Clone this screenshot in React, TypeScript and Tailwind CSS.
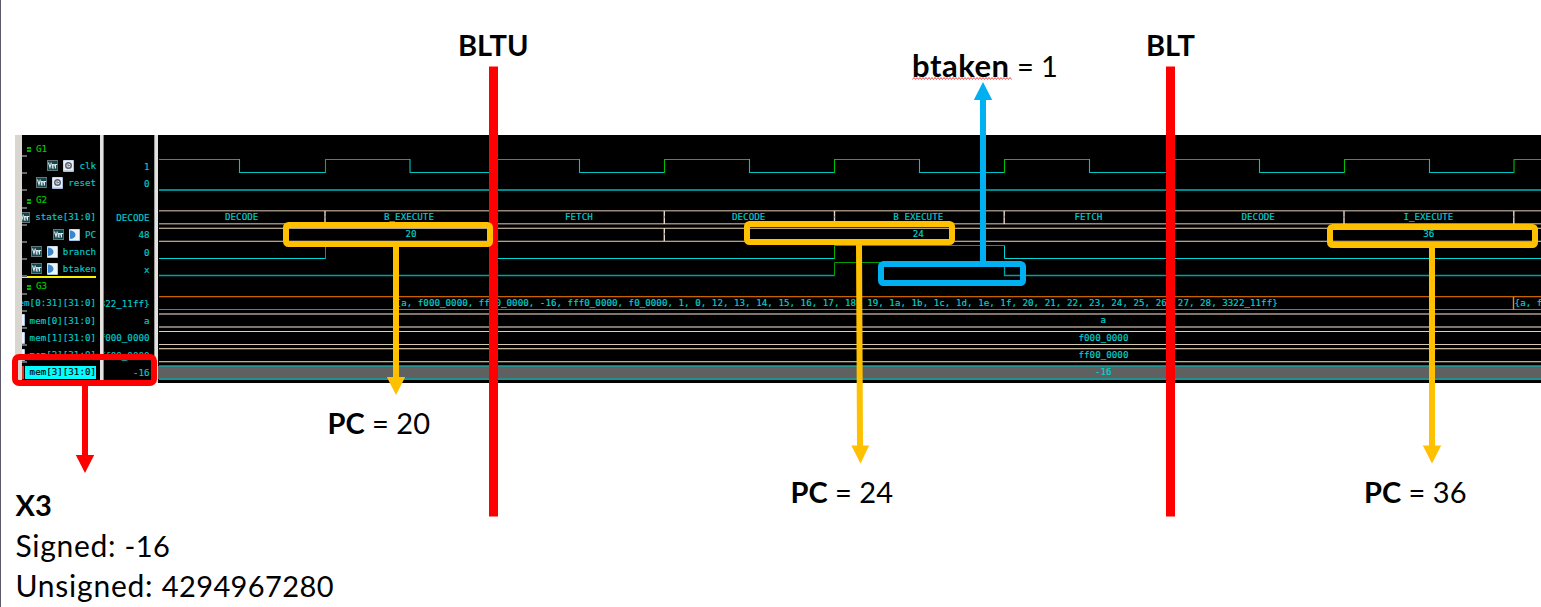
import React from "react";

type Icon = "clock" | "input" | "none";
interface Signal {
  name: string;
  value?: string;
  group?: boolean;
  icon?: Icon;
  ver?: boolean;
  underline?: boolean;
  selected?: boolean;
}

const signals: Signal[] = [
  { name: "G1", group: true },
  { name: "clk", value: "1", icon: "clock", ver: true },
  { name: "reset", value: "0", icon: "clock", ver: true },
  { name: "G2", group: true },
  { name: "state[31:0]", value: "DECODE", icon: "none", ver: true },
  { name: "PC", value: "48", icon: "input", ver: true },
  { name: "branch", value: "0", icon: "input", ver: true },
  { name: "btaken", value: "x", icon: "input", ver: true, underline: true },
  { name: "G3", group: true },
  { name: "mem[0:31][31:0]", value: "3322_11ff}", icon: "none" },
  { name: "mem[0][31:0]", value: "a", icon: "input" },
  { name: "mem[1][31:0]", value: "f000_0000", icon: "input" },
  { name: "mem[2][31:0]", value: "ff00_0000", icon: "input" },
  { name: "mem[3][31:0]", value: "-16", icon: "input", selected: true },
];

const VerIcon = () => (
  <svg width="11" height="11" viewBox="0 0 11 11" className="shrink-0">
    <rect width="11" height="11" fill="#66777b" />
    <rect x="1" y="1" width="9.300" height="9" fill="#12464f" />
    <path
      d="M1.500 2.500L3 7.500 4.400 2.500M5 6h2.200V4.500H5.300v3.500h2M8.500 8.500V4.500h1.700"
      fill="none"
      stroke="#e2e8e8"
      strokeWidth="1.100"
    />
  </svg>
);

const ClockIcon = () => (
  <svg width="11" height="12" viewBox="0 0 11 12" className="shrink-0">
    <rect width="11" height="12" rx=".8" fill="#a9bedd" />
    <rect x=".5" y=".5" width="9.500" height="10" fill="#e9eef6" />
    <circle cx="5.500" cy="5.500" r="2.800" fill="#dfe3e8" stroke="#59636f" strokeWidth="1.400" />
    <path d="M5 6.500V4M5 5.500h2" stroke="#59636f" strokeWidth=".8" />
  </svg>
);

const InputIcon = () => (
  <svg width="11" height="12" viewBox="0 0 11 12" className="shrink-0">
    <rect width="11" height="12" rx=".8" fill="#a9c1e0" />
    <rect x=".5" y=".5" width="9.500" height="10.500" fill="#f0f4f9" />
    <path d="M1 1.500C4 1.600 6.500 3.400 6.500 5.800S4 10 1 10Z" fill="#3b86cf" />
  </svg>
);

const NameRow = ({ s }: { s: Signal }) => {
  if (s.group) {
    return (
      <div className="flex h-[17.2px] items-center gap-[5px] pl-[5px] text-[#00d000]">
        <svg width="4" height="5" className="mt-[2px] shrink-0">
          <path d="M0 1h4M0 4h4" stroke="#00f000" strokeWidth="1.600" />
        </svg>
        <span>{s.name}</span>
      </div>
    );
  }
  if (s.selected) {
    return (
      <div className="flex h-[17.2px] items-center justify-end pr-[4px]">
        <div className="mr-px h-[13px] w-[2px] shrink-0 bg-[#e03020]" />
        <div className="flex h-[13px] w-[71px] shrink-0 items-center justify-end bg-[#00ffff] text-black">
          {s.name}
        </div>
      </div>
    );
  }
  return (
    <div className="relative flex h-[17.2px] items-center justify-end pr-[4px]">
      {s.ver && <VerIcon />}
      {s.icon !== "none" && (
        <span className="ml-[5px] shrink-0">{s.icon === "clock" ? <ClockIcon /> : <InputIcon />}</span>
      )}
      <span className="ml-[5px] shrink-0">{s.name}</span>
      {s.underline && <div className="absolute -bottom-[0.6px] left-0 h-[2.5px] w-[74px] bg-[#f8f000]" />}
    </div>
  );
};

const edges = [239.5, 325.5, 410, 494.5, 579.5, 664.5, 749.5, 834.5, 919.5, 1004.5, 1089.5, 1174.5, 1259.5, 1344.5, 1429.5, 1514, 1541];

const Clock = () => (
  <g strokeWidth="1.100">
    <path d="M159 159.500H239.500" stroke="#00c400" />
    {edges.slice(0, -1).map((x, i) => {
      const falling = i % 2 === 0;
      return (
        <path
          key={x}
          d={falling ? `M${x} 159V172.5H${edges[i + 1]}` : `M${x} 173V159.5H${edges[i + 1]}`}
          stroke={falling ? "#00c4c4" : "#00c000"}
        />
      );
    })}
  </g>
);

const Line = ({ y, c, w = 1 }: { y: number; c: string; w?: number }) => (
  <path d={`M159 ${y}H1541`} stroke={c} strokeWidth={w} />
);

const labels: [number, number, string][] = [
  [225, 220, "DECODE"],
  [384, 220, "B_EXECUTE"],
  [565, 220, "FETCH"],
  [732, 220, "DECODE"],
  [893.3, 220, "B_EXECUTE"],
  [1074.5, 220, "FETCH"],
  [1241.5, 220, "DECODE"],
  [1403.4, 220, "I_EXECUTE"],
  [405.5, 237.3, "20"],
  [912.8, 237.3, "24"],
  [1423.3, 237.3, "36"],
  [
    395.6,
    306.2,
    "{a, f000_0000, ff00_0000, -16, fff0_0000, f0_0000, 1, 0, 12, 13, 14, 15, 16, 17, 18, 19, 1a, 1b, 1c, 1d, 1e, 1f, 20, 21, 22, 23, 24, 25, 26, 27, 28, 3322_11ff}",
  ],
  [1514.6, 306.2, "{a, f"],
  [1100.6, 323.3, "a"],
  [1078.5, 340.6, "f000_0000"],
  [1078.5, 357.8, "ff00_0000"],
  [1095, 375, "-16"],
];

const Waves = () => (
  <svg viewBox="158 135 1383 248" className="h-[248px] w-[1383px] shrink-0" fill="none">
    <Clock />
    <Line y={190} c="#008a8c" w={2} />
    <Line y={210.5} c="#988878" />
    <Line y={211.5} c="#4c443c" />
    <Line y={223.5} c="#988878" />
    <Line y={224.5} c="#4c443c" />
    <Line y={227.5} c="#3a342e" />
    <Line y={228.5} c="#b0a090" />
    <Line y={240.5} c="#3a342e" />
    <Line y={241.5} c="#b0a090" />
    {[325, 664.3, 834.5, 1004.2, 1344, 1513.8].map((x) => (
      <g key={x}>
        <path d={`M${x} 211V224`} stroke="#e8d4c4" strokeWidth="1.400" />
        <path d={`M${x} 216.5v1`} stroke="#6e6258" strokeWidth="1.400" />
      </g>
    ))}
    <path d="M664.300 228V241" stroke="#e8d4c4" strokeWidth="1.400" />
    <path d="M664.300 233.500v1" stroke="#6e6258" strokeWidth="1.400" />
    <path d="M159 258.500H325.500M494 258.500H834.500M1004.500 245.500V258.500H1541" stroke="#00d8d8" />
    <path d="M325.500 259V245.500H494M834.500 259V245.500H1004.500" stroke="#00b400" />
    <path d="M159 275.500H834.500M1004.500 262.500V275.500H1541" stroke="#00a0a0" strokeWidth="1.300" />
    <path d="M834.500 276V262.500H1004.500" stroke="#009c00" />
    <Line y={296.5} c="#c86400" />
    <Line y={297.5} c="#381c00" />
    <Line y={309.5} c="#c86400" />
    <path d="M1513.500 297V310" stroke="#f08820" strokeWidth="1.400" />
    <Line y={314} c="#81746a" w={2} />
    <Line y={327} c="#81746a" w={2} />
    <Line y={331.5} c="#e4ccbc" />
    <Line y={344.5} c="#d4c8b0" />
    <Line y={348.5} c="#c4b49c" />
    <Line y={349.5} c="#3c362e" />
    <Line y={361.5} c="#c4a898" />
    <Line y={362.5} c="#3c362e" />
    <rect x="158" y="366" width="1383" height="13" fill="#606060" />
    <Line y={366} c="#18a0a0" w={1.6} />
    <Line y={379.2} c="#109c9c" w={1.8} />
    <g
      fill="#00d4d4"
      stroke="#00d4d4"
      strokeWidth=".15"
      className="font-['DejaVu_Sans_Mono',monospace] text-[9.2px]"
    >
      {labels.map(([x, y, t]) => (
        <text key={`${x}-${y}`} x={x} y={y} textLength={t.length * 5.548}>
          {t}
        </text>
      ))}
    </g>
  </svg>
);

const Arrows = () => (
  <svg viewBox="0 0 1541 607" className="absolute inset-0 h-[607px] w-[1541px]" fill="none">
    <path d="M489 66.500h9v450h-9ZM1166 66.500h9v450h-9Z" fill="#ff0000" />
    <path d="M393 244h6V377h6.200L396 395l-9.200-18H393Z" fill="#ffc000" />
    <path d="M856 242h6L863 445.500h6.200L860.500 463.500l-9.200-18H857Z" fill="#ffc000" />
    <path d="M1429 245h6V445.500h6.200L1432 463.500l-9.200-18H1429Z" fill="#ffc000" />
    <path d="M980 264h6V100h6.200L983 82l-9.200 18H980Z" fill="#00b0f0" />
    <path d="M82 383h6V455h6.200L85 473l-9.200-18H82Z" fill="#ff0000" />
    <g strokeWidth="6">
      <rect x="286" y="225" width="204" height="19" rx="2.500" stroke="#ffc000" />
      <rect x="747" y="224" width="205" height="18" rx="2.500" stroke="#ffc000" />
      <rect x="1330" y="227" width="205" height="18" rx="2.500" stroke="#ffc000" />
      <rect x="881" y="264" width="142" height="19" rx="2.500" stroke="#00b0f0" />
      <rect x="15" y="357" width="139" height="26" rx="4" stroke="#ff0000" />
    </g>
    <path
      d={"M912.500 79.500" + "l1.500 -2l1.500 2".repeat(33)}
      stroke="#f03a3a"
      strokeWidth=".9"
    />
  </svg>
);

const Note = ({ className, children }: { className: string; children: React.ReactNode }) => (
  <div className={`absolute leading-[40px] whitespace-nowrap ${className}`}>{children}</div>
);

export default function App() {
  return (
    <div className="relative h-[607px] w-[1541px] overflow-hidden border-l border-[#5a5a68] bg-white">
      <div className="mt-[135px] ml-[14px] flex h-[248px] bg-black font-['DejaVu_Sans_Mono',monospace] text-[9.2px] text-[#00cccc] [-webkit-text-stroke:0.15px]">
        <div className="w-[7px] shrink-0 bg-[#d9d5d1]" />
        <div className="relative w-[78px] shrink-0 overflow-hidden pt-[5px]">
          {signals.map((s) => (
            <NameRow key={s.name} s={s} />
          ))}
          <div className="absolute top-[20px] left-0 flex flex-col gap-[15.2px]">
            {signals.slice(1).map((s) => (
              <div key={s.name} className="h-[2px] w-[5px] bg-[#686868]" />
            ))}
          </div>
        </div>
        <div className="w-[4px] shrink-0 border-r border-[#888] bg-[#e4e2e0]" />
        <div className="w-[50px] shrink-0 overflow-hidden pt-[5.7px]">
          {signals.map((s) => (
            <div key={s.name} className="flex h-[17.2px] items-center justify-end pr-[4.5px]">
              {s.value}
            </div>
          ))}
        </div>
        <div className="w-[4px] shrink-0 border-l border-[#999] bg-[#e4e2e0]" />
        <Waves />
      </div>
      <div className="absolute top-0 -left-px h-[607px] w-[1541px] font-[Lato,sans-serif] text-[29px] text-black">
        <Note className="top-[25px] left-[458px] font-bold">BLTU</Note>
        <Note className="top-[25px] left-[1146px] font-bold">BLT</Note>
        <Note className="top-[45px] left-[912px]">
          <b className="text-[31px] tracking-[0.5px]">btaken</b> = 1
        </Note>
        <Note className="top-[403px] left-[327.5px]">
          <b>PC</b> = 20
        </Note>
        <Note className="top-[472px] left-[790.5px]">
          <b>PC</b> = 24
        </Note>
        <Note className="top-[472px] left-[1364px]">
          <b>PC</b> = 36
        </Note>
        <Note className="top-[485px] left-[15.5px]">
          <div className="font-bold">X3</div>
          <div className="h-[40px]">
            <span className="text-[30px] tracking-[0.7px]">Signed: </span>
            <span className="tracking-[0.4px]">-16</span>
          </div>
          <div className="h-[40px]">
            <span className="text-[30px] tracking-[0.75px]">Unsigned: </span>
            <span className="tracking-[0.4px]">4294967280</span>
          </div>
        </Note>
        <Arrows />
      </div>
    </div>
  );
}
